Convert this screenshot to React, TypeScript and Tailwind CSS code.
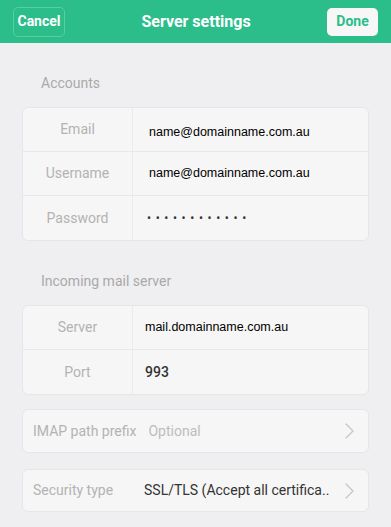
// Mail account — server settings screen.

const sans = { fontFamily: "Roboto, 'Noto Sans', sans-serif" };
const arial = { fontFamily: "'Liberation Sans', Arial, sans-serif" };

function Chevron() {
  return (
    <svg width="9" height="16" viewBox="0 0 9 16" fill="none" className="shrink-0">
      <polyline points="1,1 8,8 1,15" stroke="#c6c6c6" strokeWidth="1.3" strokeLinecap="round" strokeLinejoin="round" />
    </svg>
  );
}

function Row({ label, children, last }: { label: string; children: React.ReactNode; last?: boolean }) {
  return (
    <div className={`flex h-[44px] ${last ? "" : "border-b border-[#e8e9ec]"}`}>
      <div className="flex w-[110px] shrink-0 items-center justify-center border-r border-[#ebebeb] text-[14px] text-[#b3b3b3]">
        {label}
      </div>
      <div className="flex flex-1 items-center pl-[16px]">{children}</div>
    </div>
  );
}

export default function App() {
  return (
    <div className="h-[527px] w-[391px] overflow-hidden bg-[#efeff1]" style={sans}>
      <header className="flex h-[43px] items-center justify-between bg-[#2bbd8a] px-[13px]">
        <button className="h-[30px] w-[52px] rounded-[5px] border border-[#5acda3] text-[14px] font-bold text-white">
          Cancel
        </button>
        <h1 className="text-[16px] font-bold text-white">Server settings</h1>
        <button className="h-[28px] w-[51px] rounded-[5px] bg-[#f7f7f7] text-[14px] font-bold text-[#2bbd8a]">
          Done
        </button>
      </header>

      <div className="px-[22px]">
        <div className="pl-[19px] pt-[31px] pb-[15px] text-[14px] leading-[18px] text-[#a9a9a9]">Accounts</div>
        <div className="overflow-hidden rounded-[6px] border border-[#e6e6e8] bg-[#f6f6f6]">
          <Row label="Email">
            <span className="pt-[6px] text-[12.5px] text-black" style={arial}>name@domainname.com.au</span>
          </Row>
          <Row label="Username">
            <span className="text-[12.5px] text-black" style={arial}>name@domainname.com.au</span>
          </Row>
          <Row label="Password" last>
            <span className="-ml-[2px] text-[12px] tracking-[4.6px] text-[#333]">••••••••••••</span>
          </Row>
        </div>

        <div className="pl-[19px] pt-[31px] pb-[15px] text-[14px] leading-[18px] text-[#a9a9a9]">
          Incoming mail server
        </div>
        <div className="overflow-hidden rounded-[6px] border border-[#e6e6e8] bg-[#f6f6f6]">
          <Row label="Server">
            <span className="-ml-[4px] text-[12.5px] text-black" style={arial}>mail.domainname.com.au</span>
          </Row>
          <Row label="Port" last>
            <span className="-ml-[4px] text-[14px] font-medium text-[#333]">993</span>
          </Row>
        </div>

        <div className="mt-[14px] flex h-[44px] items-center rounded-[6px] border border-[#e6e6e8] bg-[#f6f6f6] pl-[10px] pr-[14px] text-[14px]">
          <span className="shrink-0 text-[#b3b3b3]">IMAP path prefix</span>
          <span className="ml-[12px] flex-1 text-[#bdbdbd]">Optional</span>
          <Chevron />
        </div>

        <div className="mt-[16px] flex h-[43px] items-center rounded-[6px] border border-[#e6e6e8] bg-[#f6f6f6] pl-[10px] pr-[14px] text-[14px]">
          <span className="w-[111px] shrink-0 text-[#b3b3b3]">Security type</span>
          <span className="flex-1 whitespace-nowrap text-[#333]">SSL/TLS (Accept all certifica..</span>
          <Chevron />
        </div>
      </div>
    </div>
  );
}
